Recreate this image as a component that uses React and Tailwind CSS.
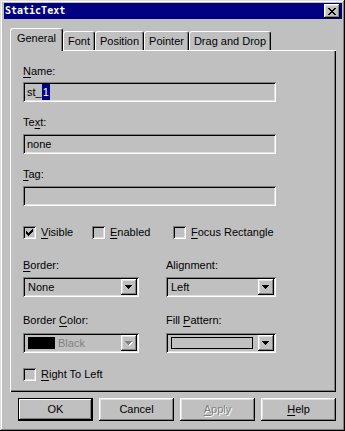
import React from 'react'

const raised = 'shadow-[inset_-1px_-1px_#000,inset_1px_1px_#fff,inset_-2px_-2px_#808080,inset_2px_2px_#dfdfdf]'
const sunken = 'shadow-[inset_1px_1px_#808080,inset_-1px_-1px_#fff,inset_2px_2px_#000,inset_-2px_-2px_#dfdfdf]'

// turn rows of X/. into a pixel path
function pix(rows) {
    let d = ''
    rows.forEach((r, y) => {
        ;[...r].forEach((c, x) => {
            if (c === 'X') d += `M${x} ${y}h1v1h-1z`
        })
    })
    return d
}

const checkPath = pix(['......X', '.....XX', 'X...XXX', 'XX.XXX.', 'XXXXX..', '.XXX...', '..X....'])
const closePath = pix(['XX....XX', '.XX..XX.', '..XXXX..', '...XX...', '..XXXX..', '.XX..XX.', 'XX....XX'])
const arrowPath = pix(['XXXXXXX', '.XXXXX.', '..XXX..', '...X...'])

function U({ children }) {
    return <span className="underline underline-offset-[2px] decoration-1">{children}</span>
}

function Label({ className = '', children }) {
    return <div className={`h-[13px] leading-[13px] ${className}`}>{children}</div>
}

function Field({ children, className = '' }) {
    return (
        <div className={`h-[20px] w-[253px] ${sunken} flex items-center pl-[4px] ${className}`}>
            {children}
        </div>
    )
}

function Check({ checked, label }) {
    return (
        <div className="flex items-center h-[13px]">
            <div className={`w-[13px] h-[13px] ${sunken} flex items-center justify-center`}>
                {checked && (
                    <svg width="7" height="7" viewBox="0 0 7 7" shapeRendering="crispEdges">
                        <path d={checkPath} fill="#000" />
                    </svg>
                )}
            </div>
            <span className="ml-[5px] leading-[13px]">{label}</span>
        </div>
    )
}

function Arrow({ disabled }) {
    return (
        <div className={`w-[16px] h-[16px] ${raised} flex items-center justify-center`}>
            <svg width="8" height="5" viewBox="0 0 8 5" shapeRendering="crispEdges">
                {disabled && <path d={arrowPath} fill="#fff" transform="translate(1 1)" />}
                <path d={arrowPath} fill={disabled ? '#808080' : '#000'} />
            </svg>
        </div>
    )
}

function Combo({ width, children, disabled }) {
    return (
        <div className={`h-[20px] ${width} ${sunken} flex items-center p-[2px]`}>
            <div className="flex-1 flex items-center pl-[3px] h-full overflow-hidden">{children}</div>
            <Arrow disabled={disabled} />
        </div>
    )
}

function Tab({ w, active, children }) {
    return (
        <div
            className={`${w} flex items-center justify-center border-l border-t border-white rounded-t-[3px] border-r border-r-black shadow-[inset_-1px_0_#808080] bg-[#c0c0c0] ${
                active ? 'h-[23px] -mb-[1px] relative z-10 pb-[3px]' : 'h-[19px]'
            }`}
        >
            {children}
        </div>
    )
}

function Button({ children, def, disabled }) {
    return (
        <div
            className={`w-[75px] h-[23px] flex items-center justify-center ${
                def
                    ? 'shadow-[inset_0_0_0_1px_#000,inset_-2px_-2px_#000,inset_2px_2px_#fff,inset_-3px_-3px_#808080]'
                    : raised
            } ${disabled ? 'text-[#808080] [text-shadow:1px_1px_#fff]' : ''}`}
        >
            {children}
        </div>
    )
}

export default function App() {
    return (
        <div
            className="w-[345px] h-[431px] bg-[#c0c0c0] pl-[4px] pr-[3px] pt-[3px] text-[11px] text-black shadow-[inset_-1px_-1px_#000,inset_1px_1px_#dfdfdf,inset_-2px_-2px_#808080,inset_2px_2px_#fff] overflow-hidden"
            style={{ fontFamily: '"Liberation Sans", Arial, sans-serif' }}
        >
            {/* title bar */}
            <div className="h-[16px] bg-[#000080] flex items-center justify-between pl-[1px] pr-[2px]">
                <span
                    className="text-white text-[10px] font-bold leading-[16px]"
                    style={{ fontFamily: '"DejaVu Sans Mono", "Liberation Mono", monospace' }}
                >
                    StaticText
                </span>
                <div className={`w-[16px] h-[14px] bg-[#c0c0c0] ${raised} flex items-center justify-center`}>
                    <svg width="8" height="7" viewBox="0 0 8 7" shapeRendering="crispEdges">
                        <path d={closePath} fill="#000" />
                    </svg>
                </div>
            </div>

            {/* tabs */}
            <div className="mt-[9px] ml-[6px] h-[22px] flex items-end">
                <Tab w="w-[53px]" active>General</Tab>
                <Tab w="w-[32px]">Font</Tab>
                <Tab w="w-[49px]">Position</Tab>
                <Tab w="w-[45px]">Pointer</Tab>
                <Tab w="w-[82px]">Drag and Drop</Tab>
            </div>

            {/* panel */}
            <div className="ml-[6px] w-[326px] h-[342px] pl-[13px] pt-[15px] shadow-[inset_1px_1px_#fff,inset_-1px_-1px_#000,inset_-2px_-2px_#808080]">
                <Label><U>N</U>ame:</Label>
                <Field className="mt-[4px]">
                    <span>st_</span>
                    <span className="bg-[#000080] text-white px-[1px]">1</span>
                </Field>

                <Label className="mt-[14px]">Te<U>x</U>t:</Label>
                <Field className="mt-[5px]">none</Field>

                <Label className="mt-[14px]"><U>T</U>ag:</Label>
                <Field className="mt-[5px]" />

                <div className="mt-[20px] flex">
                    <div className="w-[69px]"><Check checked label={<><U>V</U>isible</>} /></div>
                    <div className="w-[81px]"><Check label={<><U>E</U>nabled</>} /></div>
                    <Check label={<><U>F</U>ocus Rectangle</>} />
                </div>

                <div className="mt-[20px] grid grid-cols-[143px_1fr]">
                    <Label><U>B</U>order:</Label>
                    <Label>Alignment:</Label>
                    <div className="mt-[5px]">
                        <Combo width="w-[116px]">None</Combo>
                    </div>
                    <div className="mt-[5px]">
                        <Combo width="w-[110px]">Left</Combo>
                    </div>
                </div>

                <div className="mt-[17px] grid grid-cols-[143px_1fr]">
                    <Label>Border <U>C</U>olor:</Label>
                    <Label>Fill <U>P</U>attern:</Label>
                    <div className="mt-[6px]">
                        <Combo width="w-[116px]" disabled>
                            <div className="w-[27px] h-[12px] bg-black" />
                            <span className="ml-[3px] text-[#808080]">Black</span>
                        </Combo>
                    </div>
                    <div className="mt-[6px]">
                        <Combo width="w-[110px]">
                            <div className="w-[82px] h-[12px] border border-black" />
                        </Combo>
                    </div>
                </div>

                <div className="mt-[15px]">
                    <Check label={<><U>R</U>ight To Left</>} />
                </div>
            </div>

            {/* buttons */}
            <div className="mt-[6px] ml-[14px] flex gap-[6px]">
                <Button def>OK</Button>
                <Button>Cancel</Button>
                <Button disabled><U>A</U>pply</Button>
                <Button><U>H</U>elp</Button>
            </div>
        </div>
    )
}
